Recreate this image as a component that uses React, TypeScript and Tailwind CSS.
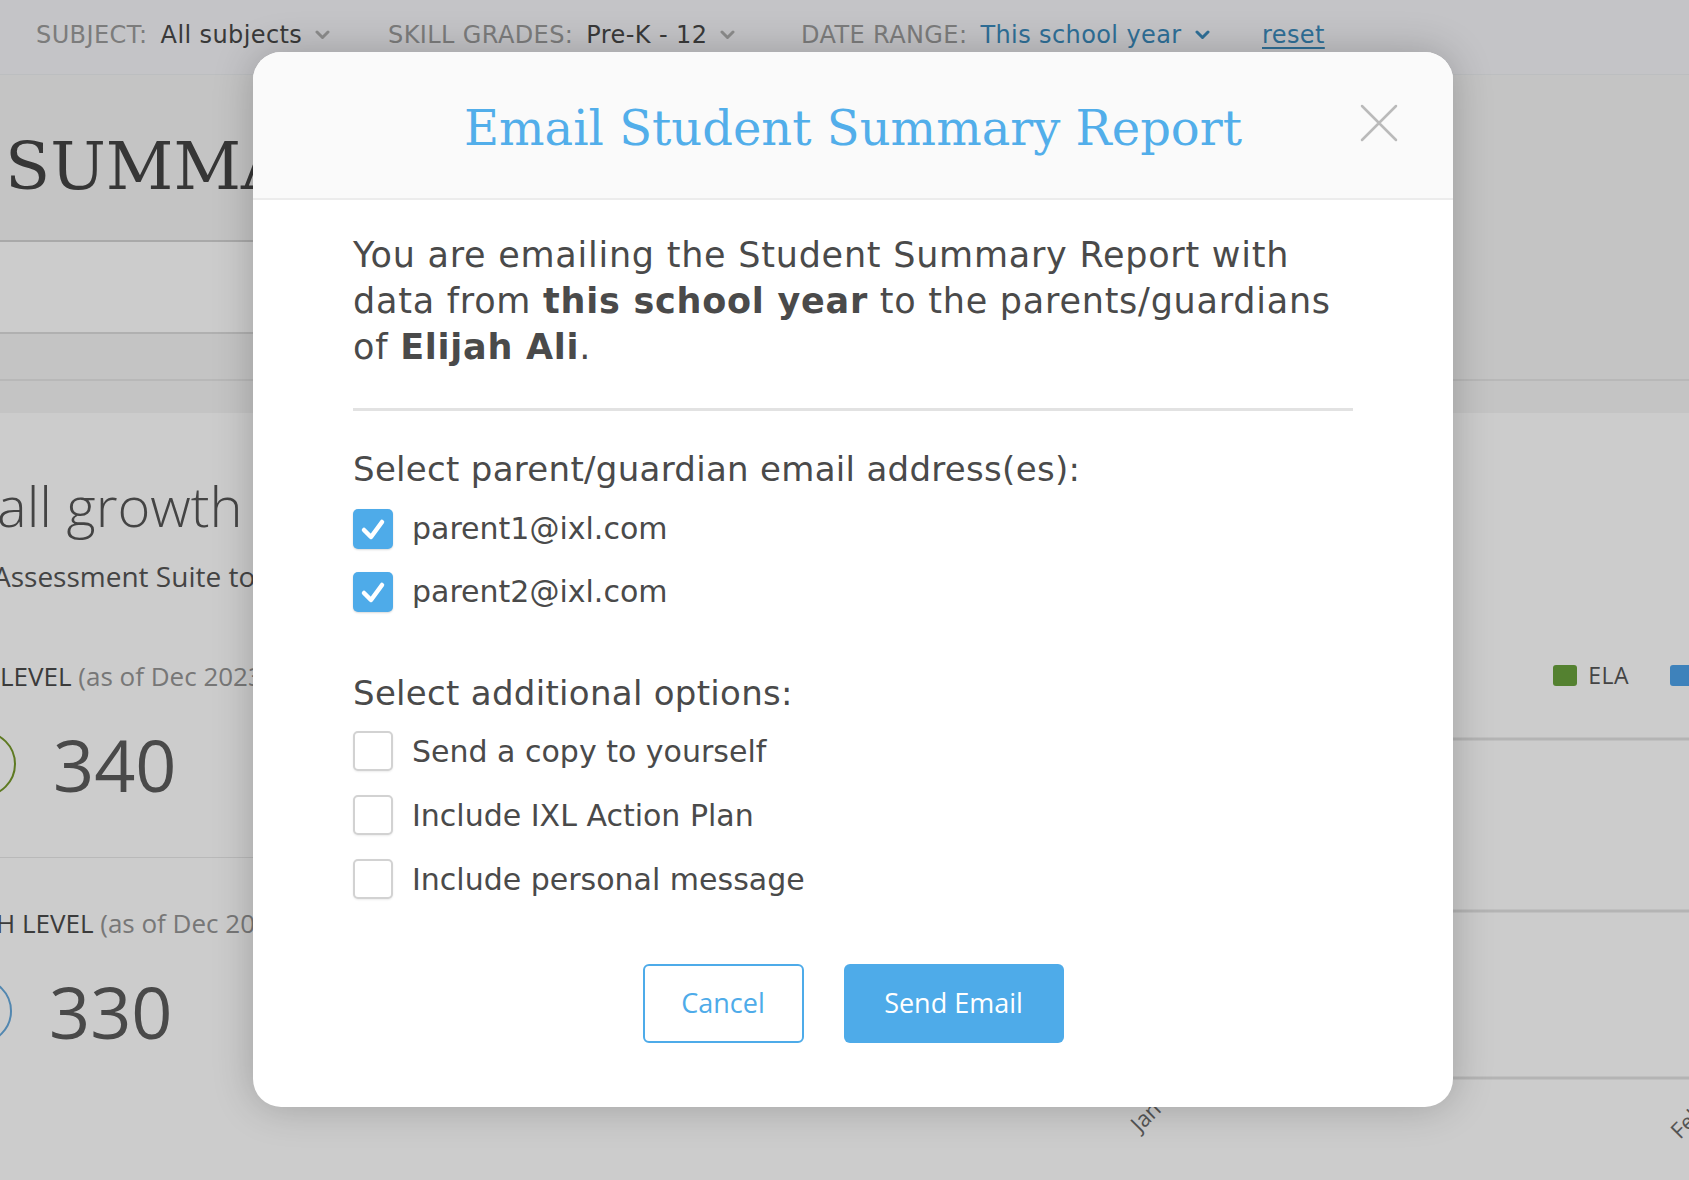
const emails = ['parent1@ixl.com', 'parent2@ixl.com']
const options = ['Send a copy to yourself', 'Include IXL Action Plan', 'Include personal message']

function Chevron({ color }: { color: string }) {
  return (
    <svg width="15" height="10" viewBox="0 0 15 10" className="ml-[13px]">
      <polyline points="2,2 7.5,7.5 13,2" fill="none" stroke={color} strokeWidth="3" strokeLinecap="round" strokeLinejoin="round" />
    </svg>
  )
}

function Checkbox({ checked }: { checked: boolean }) {
  if (checked) {
    return (
      <div className="flex h-[40px] w-[40px] shrink-0 items-center justify-center rounded-[5px] bg-[#4eabe9] shadow-[0_1px_2px_rgba(0,0,0,0.15)]">
        <svg width="40" height="40" viewBox="0 0 40 40">
          <polyline points="11,21 18,28 29,13" fill="none" stroke="white" strokeWidth="4.5" strokeLinecap="round" strokeLinejoin="round" />
        </svg>
      </div>
    )
  }
  return <div className="h-[40px] w-[40px] shrink-0 rounded-[5px] border-2 border-[#d2d2d2] bg-white shadow-[0_1px_2px_rgba(0,0,0,0.08)]" />
}

function FilterBar() {
  return (
    <header className="flex h-[75px] items-center border-b border-[#eceef1] bg-[#f5f6f9] pb-[4px] pl-[36px] text-[24px] tracking-[0.4px]">
      <div className="flex w-[352px] items-center">
        <span className="text-[#9b9b9b]">SUBJECT:</span>
        <span className="ml-[13px] text-[#484848]">All subjects</span>
        <Chevron color="#b0b0b0" />
      </div>
      <div className="flex w-[413px] items-center">
        <span className="text-[#9b9b9b]">SKILL GRADES:</span>
        <span className="ml-[13px] text-[#484848]">Pre-K - 12</span>
        <Chevron color="#b0b0b0" />
      </div>
      <div className="flex w-[461px] items-center">
        <span className="text-[#9b9b9b]">DATE RANGE:</span>
        <span className="ml-[13px] text-[#3b8bbd]">This school year</span>
        <Chevron color="#3b8bbd" />
      </div>
      <a className="text-[#3b8bbd] underline underline-offset-4">reset</a>
    </header>
  )
}

function LevelCard({ label, score, ring, border }: { label: string; score: string; ring: string; border?: boolean }) {
  return (
    <div className={`h-[247px] pt-[47px] ${border ? 'border-b border-[#e8e8e8]' : ''}`}>
      <div className="font-['Open_Sans',sans-serif] text-[26px] leading-[36px] whitespace-nowrap">
        <span className="text-[#4a4a4a]">{label}</span>
        <span className="text-[#959595]"> (as of Dec 2023)</span>
      </div>
      <div className="mt-[30px] flex items-center">
        <div className={`ml-[-50px] h-[66px] w-[66px] rounded-full border-2 ${ring}`} />
        <span className="ml-[37px] font-['Open_Sans',sans-serif] text-[72px] leading-[80px] text-[#5c5c5c]">{score}</span>
      </div>
    </div>
  )
}

function Page() {
  return (
    <div className="flex h-full flex-col">
      <FilterBar />
      <div className="flex h-[306px] border-b-2 border-[#e6e6e6] bg-[#f5f5f5]">
        <div className="flex w-[640px] flex-col">
          <div className="flex h-[167px] items-center border-b-2 border-[#d4d4d4] pt-[18px] pl-[5px] font-['DejaVu_Serif',serif] text-[66px] text-[#444]">
            SUMMARY
          </div>
          <div className="h-[92px] border-b-2 border-[#dcdcdc] bg-white" />
        </div>
      </div>
      <div className="h-[32px] bg-[#f6f6f6]" />
      <div className="flex flex-1 bg-white">
        <div className="w-[640px] overflow-hidden">
          <div className="mt-[57px] ml-[-3px] font-['Open_Sans',sans-serif] text-[56px] leading-[70px] font-light text-[#555] whitespace-nowrap">all growth</div>
          <div className="mt-[16px] ml-[-7px] font-['Open_Sans',sans-serif] text-[28px] leading-[40px] text-[#555] whitespace-nowrap">Assessment Suite to track progress</div>
          <div className="mt-[15px]">
            <LevelCard label="LEVEL" score="340" ring="border-[#76992b]" border />
            <div className="ml-[-4px]">
              <LevelCard label="H LEVEL" score="330" ring="border-[#67a9dc]" />
            </div>
          </div>
        </div>
        <div className="relative flex-1">
          <div className="mt-[245px] flex items-center justify-end gap-[11px] font-['Open_Sans',sans-serif] text-[23px] tracking-[0.5px] text-[#555]">
            <div className="h-[21px] w-[24px] rounded-[3px] bg-[#6aa23c]" />
            <span className="mr-[30px]">ELA</span>
            <div className="mr-[-5px] h-[21px] w-[24px] rounded-l-[3px] bg-[#4ea3ea]" />
          </div>
          <svg className="absolute inset-0 h-full w-full" viewBox="0 0 1049 767" preserveAspectRatio="none">
            <line x1="0" y1="326" x2="1049" y2="326" stroke="#e2e2e2" strokeWidth="3" />
            <line x1="0" y1="498" x2="1049" y2="498" stroke="#e2e2e2" strokeWidth="3" />
            <line x1="0" y1="665" x2="1049" y2="665" stroke="#e2e2e2" strokeWidth="3" />
            <text x="500" y="720" transform="rotate(-45 500 720)" fontFamily="Open Sans" fontSize="22" fill="#6a6a6a">Jan</text>
            <text x="1040" y="727" transform="rotate(-45 1040 727)" fontFamily="Open Sans" fontSize="22" fill="#6a6a6a">Feb</text>
          </svg>
        </div>
      </div>
    </div>
  )
}

export default function App() {
  return (
    <div className="relative h-[1180px] w-[1689px] overflow-hidden bg-white font-['DejaVu_Sans',sans-serif]">
      <Page />
      <div className="absolute inset-0 bg-black/20" />

      <div className="absolute left-[253px] top-[52px] w-[1200px] rounded-[28px] bg-white pb-[64px] shadow-[0_0_40px_rgba(0,0,0,0.22)]">
        <div className="relative flex h-[148px] items-center justify-center rounded-t-[28px] border-b-2 border-[#ececec] bg-[#fafafa]">
          <h2 className="mt-[6px] font-['DejaVu_Serif',serif] text-[48px] text-[#52aeea]">Email Student Summary Report</h2>
          <button className="absolute right-[55px] top-[52px]">
            <svg width="38" height="38" viewBox="0 0 38 38">
              <path d="M2 2 L36 36 M36 2 L2 36" stroke="#bababa" strokeWidth="2.5" strokeLinecap="round" />
            </svg>
          </button>
        </div>

        <div className="px-[100px] text-[#4a4a4a]">
          <p className="pt-[32px] text-[35px] leading-[46px] tracking-[0.75px]">
            You are emailing the Student Summary Report with
            <br />
            data from <b>this school year</b> to the parents/guardians
            <br />
            of <b>Elijah Ali</b>.
          </p>
          <div className="mt-[38px] h-[3px] bg-[#e2e2e2]" />

          <h3 className="mt-[35px] text-[34px] leading-[46px] tracking-[0.3px]">Select parent/guardian email address(es):</h3>
          <div className="mt-[5px]">
            {emails.map((email) => (
              <label key={email} className="flex h-[63px] items-center gap-[19px]">
                <Checkbox checked />
                <span className="text-[30px]">{email}</span>
              </label>
            ))}
          </div>

          <h3 className="mt-[47px] text-[34px] leading-[46px] tracking-[0.3px]">Select additional options:</h3>
          <div className="mt-[3px]">
            {options.map((opt) => (
              <label key={opt} className="flex h-[64px] items-center gap-[19px]">
                <Checkbox checked={false} />
                <span className="text-[30px]">{opt}</span>
              </label>
            ))}
          </div>

          <div className="mt-[53px] flex justify-center gap-[40px] font-['Open_Sans',sans-serif] text-[27px]">
            <button className="h-[79px] w-[161px] rounded-[6px] border-2 border-[#4eabe9] bg-white text-[#4eabe9]">Cancel</button>
            <button className="h-[79px] w-[220px] rounded-[6px] bg-[#4eabe9] text-white">Send Email</button>
          </div>
        </div>
      </div>
    </div>
  )
}
